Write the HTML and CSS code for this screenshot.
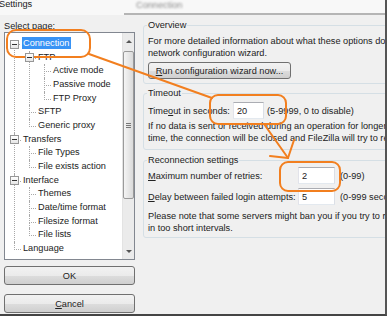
FILE: index.html
```html
<!DOCTYPE html>
<html lang="en">
  <head>
    <meta charset="UTF-8" />
    <title>Settings</title>
    <link rel="stylesheet" href="styles.css">
  </head>
  <body>
    <div class="page">
      <div class="window">
        <div class="titlebar">
          <span class="title">Settings</span>
          <span class="rest"><span class="blurred">Connection</span></span>
        </div>

        <div class="content">
          <div class="sidebar">
            <div class="caption">Select page:</div>
            <div class="treebox">
              <ul class="tree">
                <li>
                  <span class="exp"></span>
                  <div class="row"><span class="sel">Connection</span></div>
                  <ul>
                    <li>
                      <span class="exp"></span>
                      <div class="row">FTP</div>
                      <ul>
                        <li><div class="row">Active mode</div></li>
                        <li><div class="row">Passive mode</div></li>
                        <li><div class="row">FTP Proxy</div></li>
                      </ul>
                    </li>
                    <li><div class="row">SFTP</div></li>
                    <li><div class="row">Generic proxy</div></li>
                  </ul>
                </li>
                <li>
                  <span class="exp"></span>
                  <div class="row">Transfers</div>
                  <ul>
                    <li><div class="row">File Types</div></li>
                    <li><div class="row">File exists action</div></li>
                  </ul>
                </li>
                <li>
                  <span class="exp"></span>
                  <div class="row">Interface</div>
                  <ul>
                    <li><div class="row">Themes</div></li>
                    <li><div class="row">Date/time format</div></li>
                    <li><div class="row">Filesize format</div></li>
                    <li><div class="row">File lists</div></li>
                  </ul>
                </li>
                <li><div class="row">Language</div></li>
              </ul>
              <div class="scrollbar">
                <div class="sb-arrow"><span class="arrow-up"></span></div>
                <div class="thumb"><span class="grip"></span></div>
                <div class="sb-space"></div>
                <div class="sb-arrow"><span class="arrow-down"></span></div>
              </div>
            </div>
            <button class="btn">OK</button>
            <button class="btn cancel"><u>C</u>ancel</button>
          </div>

          <div class="panel">
            <fieldset class="group overview">
              <legend>Overview</legend>
              <div class="text first">For more detailed information about what these options do, please run the<br>network configuration wizard.</div>
              <button class="btn wizard"><u>R</u>un configuration wizard now...</button>
            </fieldset>

            <fieldset class="group timeout">
              <legend>Timeout</legend>
              <div class="field-row">
                <span class="lbl-t">Time<u>o</u>ut in seconds:</span>
                <input class="field" type="text" value="20">
                <span class="unit-t">(5-9999, 0 to disable)</span>
              </div>
              <div class="text note">If no data is sent or received during an operation for longer than the specified<br>time, the connection will be closed and FileZilla will try to reconnect.</div>
            </fieldset>

            <fieldset class="group reconnect">
              <legend>Reconnection settings</legend>
              <div class="field-row">
                <span class="lbl-r"><u>M</u>aximum number of retries:</span>
                <input class="field wide" type="text" value="2">
                <span class="unit-r">(0-99)</span>
              </div>
              <div class="field-row second">
                <span class="lbl-r"><u>D</u>elay between failed login attempts:</span>
                <input class="field wide" type="text" value="5">
                <span class="unit-r">(0-999 seconds)</span>
              </div>
              <div class="text warn">Please note that some servers might ban you if you try to reconnect too often or<br>in too short intervals.</div>
            </fieldset>
          </div>
        </div>
      </div>

      <!-- hand-drawn annotations over the screenshot -->
      <svg class="annot" width="391" height="318" viewBox="0 0 391 318">
        <g fill="none" stroke="#f27f1f" stroke-width="2" stroke-linecap="round" stroke-linejoin="round">
          <rect x="7" y="30" width="83" height="27" rx="9" />
          <line x1="89" y1="54" x2="212" y2="98" />
          <rect x="210" y="95" width="76" height="29" rx="8" />
          <line x1="264" y1="124" x2="288" y2="158" />
          <line x1="270" y1="156" x2="288" y2="158" />
          <line x1="294" y1="140" x2="288" y2="158" />
          <rect x="280" y="162" width="60" height="29" rx="8" />
        </g>
      </svg>
    </div>
  </body>
</html>
```

FILE: styles.css
```css
* {
  box-sizing: border-box;
}
body {
  margin: 0;
  background-color: #ffffff;
  font-family: 'Liberation Sans', Arial, sans-serif;
  font-size: 9.2px;
  color: #222;
}
.page {
  position: relative;
  width: 391px;
  height: 318px;
}
.window {
  width: 387px;
  height: 316px;
  background-color: #f0f0f0;
  border-right: 2px solid #555;
  border-bottom: 2px solid #444;
  overflow: hidden;
}
.titlebar {
  display: flex;
  height: 15px;
  background-color: #f8f8f8;
}
.title {
  width: 125px;
  line-height: 10px;
  margin-top: -1px;
  margin-left: -1px;
}
.rest {
  flex: 1;
  border-bottom: 2px solid #b5b5b5;
}
.blurred {
  display: inline-block;
  padding-left: 12px;
  color: #8a8a8a;
  filter: blur(1.3px);
}
.content {
  display: flex;
  gap: 8px;
  padding-left: 4px;
}
.sidebar {
  width: 131px;
  display: flex;
  flex-direction: column;
}
.caption {
  line-height: 12px;
  padding-top: 5px;
}
.treebox {
  height: 228px;
  display: flex;
  border: 1px solid #828790;
  background-color: #fff;
}

/* tree with dotted connectors */
.tree,
.tree ul {
  list-style: none;
  margin: 0;
  padding: 0;
}
.tree {
  flex: 1;
  padding: 4px 0 0 9px;
}
.tree ul {
  padding-left: 6px;
}
.tree li {
  position: relative;
  padding-left: 9px;
}
.tree li::before {
  content: "";
  position: absolute;
  left: 0;
  top: 0;
  width: 6px;
  height: 7px;
  border-left: 1px dotted #a8a8a8;
  border-bottom: 1px dotted #a8a8a8;
}
.tree li:not(:last-child)::after {
  content: "";
  position: absolute;
  left: 0;
  top: 7px;
  bottom: 0;
  border-left: 1px dotted #a8a8a8;
}
.tree > li:first-child::before {
  border-left: none;
}
.row {
  height: 13.67px;
  line-height: 13.67px;
  white-space: nowrap;
}
.exp {
  position: absolute;
  left: -4px;
  top: 2.5px;
  width: 9px;
  height: 9px;
  border: 1px solid #979797;
  background: linear-gradient(#ffffff, #e6e6e6);
  z-index: 1;
}
.exp::after {
  content: "";
  position: absolute;
  left: 1px;
  top: 3px;
  width: 5px;
  height: 1px;
  background-color: #333;
}
.sel {
  display: inline-block;
  line-height: 12px;
  padding: 0 2px 0 1px;
  margin-left: -1px;
  background-color: #3893f5;
  color: #fff;
}

.scrollbar {
  width: 12px;
  display: flex;
  flex-direction: column;
  align-items: center;
  background-color: #ebebeb;
  border-left: 1px solid #e3e3e3;
}
.sb-arrow {
  height: 16px;
  display: flex;
  align-items: center;
  justify-content: center;
}
.arrow-up {
  border-left: 3px solid transparent;
  border-right: 3px solid transparent;
  border-bottom: 3px solid #555;
}
.arrow-down {
  border-left: 3px solid transparent;
  border-right: 3px solid transparent;
  border-top: 3px solid #555;
}
.thumb {
  width: 11px;
  height: 148px;
  margin-top: 2px;
  display: flex;
  align-items: center;
  justify-content: center;
  border: 1px solid #9a9a9a;
  border-radius: 2px;
  background: linear-gradient(to right, #f4f4f4, #dadada);
}
.grip {
  width: 5px;
  height: 5px;
  border-top: 1px solid #777;
  border-bottom: 1px solid #777;
  background: linear-gradient(#777, #777) center / 100% 1px no-repeat;
}
.sb-space {
  flex: 1;
}

.btn {
  height: 19px;
  margin-top: 6px;
  padding: 0;
  font: inherit;
  color: #222;
  border: 1px solid #707070;
  border-radius: 3px;
  background: linear-gradient(#f2f2f2 0%, #ebebeb 50%, #dddddd 51%, #cfcfcf 100%);
}
.cancel {
  margin-top: 9px;
}

.panel {
  flex: 1;
  overflow: hidden;
  padding-top: 4px;
}
.group {
  width: 270px;
  min-width: 0;
  margin: 0;
  padding: 0 0 4px 4px;
  border: 1px solid #d5dfe5;
  border-radius: 3px;
}
legend {
  padding: 0 1px;
  margin-left: -1px;
  line-height: 12px;
}
.text {
  line-height: 12px;
  white-space: nowrap;
}
.overview .first {
  margin-top: 4px;
}
.wizard {
  width: 143px;
  height: 17px;
  margin-top: 3px;
}
.timeout {
  margin-top: 3px;
  padding-bottom: 5px;
}
.reconnect {
  margin-top: 4px;
  padding-bottom: 3px;
}
.field-row {
  display: flex;
  align-items: center;
  height: 17px;
  white-space: nowrap;
}
.timeout .field-row {
  margin-top: 3px;
}
.reconnect .field-row {
  margin-top: 1px;
}
.reconnect .second {
  margin-top: 4px;
}
.timeout .note {
  margin-top: 1px;
}
.reconnect .warn {
  margin-top: 5px;
}
.lbl-t {
  width: 85px;
  flex-shrink: 0;
}
.lbl-r {
  width: 150px;
  flex-shrink: 0;
}
.field {
  width: 31px;
  height: 17px;
  flex-shrink: 0;
  padding: 0 3px;
  font: inherit;
  color: #222;
  background-color: #fff;
  border: 1px solid;
  border-color: #abadb3 #dbdfe6 #e3e9ef #e2e3ea;
  outline: none;
}
.field.wide {
  width: 37px;
}
.unit-t {
  margin-left: 3px;
}
.unit-r {
  margin-left: 5px;
}

.annot {
  position: absolute;
  left: 0;
  top: 0;
  pointer-events: none;
}
```
